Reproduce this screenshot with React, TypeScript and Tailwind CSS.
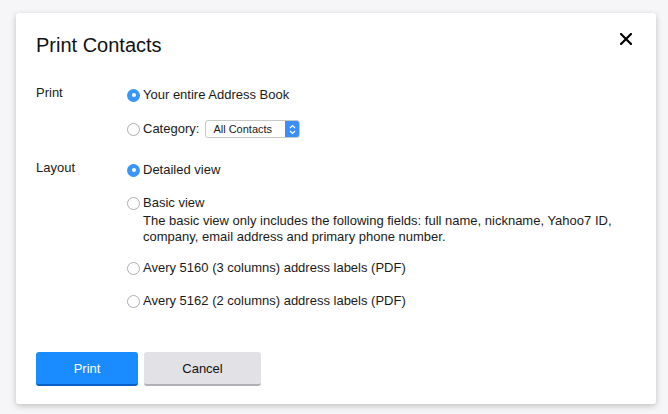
import React from "react";

function Radio({ checked }: { checked?: boolean }) {
  return checked ? (
    <span className="w-[13px] h-[13px] rounded-full bg-[#3a96f7] flex items-center justify-center shrink-0">
      <span className="w-[4px] h-[4px] rounded-full bg-white" />
    </span>
  ) : (
    <span className="w-[13px] h-[13px] rounded-full bg-white border border-[#aeaeae] shrink-0" />
  );
}

function Option({ checked, children }: { checked?: boolean; children: React.ReactNode }) {
  return (
    <div className="h-[18px] flex items-center gap-[3px]">
      <Radio checked={checked} />
      <span className="leading-[16px]">{children}</span>
    </div>
  );
}

export default function App() {
  return (
    <div className="min-h-[414px] bg-[#f6f6f8] pt-[13px] pl-[16px] text-[13px] text-[#1a1a1a]" style={{ fontFamily: '"Liberation Sans", Arial, sans-serif' }}>
      <div className="w-[640px] h-[391px] bg-white rounded-[3px] shadow-[0_2px_6px_rgba(0,0,0,0.22)] flex flex-col px-5">
        <div className="mt-[18px] flex justify-between items-start">
          <h1 className="text-[20px] leading-[28px] text-[#111]">Print Contacts</h1>
          <svg width="12" height="12" viewBox="0 0 12 12" className="mt-[2px] mr-[4px]">
            <path d="M1 1L11 11M11 1L1 11" stroke="#000" strokeWidth="2.2" strokeLinecap="square" />
          </svg>
        </div>

        <div className="grid grid-cols-[91px_1fr] mt-[27px]">
          <div className="-mt-[2px] leading-[18px]">Print</div>
          <div className="flex flex-col gap-[16px]">
            <Option checked>Your entire Address Book</Option>
            <div className="h-[18px] flex items-center gap-[3px]">
              <Radio />
              <span className="leading-[16px]">Category:</span>
              <div className="ml-[3px] w-[95px] h-[18px] border border-[#c8c8c8] rounded-[3px] flex items-stretch overflow-hidden bg-white">
                <span className="flex-1 text-[11px] leading-[16px] pl-[7px]">All Contacts</span>
                <span className="w-[14px] bg-[#3a8ef6] flex items-center justify-center">
                  <svg width="7" height="11" viewBox="0 0 7 11">
                    <path d="M1 4L3.5 1.5L6 4M1 7L3.5 9.5L6 7" stroke="#fff" strokeWidth="1.2" fill="none" />
                  </svg>
                </span>
              </div>
            </div>
          </div>

          <div className="mt-[21px] leading-[18px]">Layout</div>
          <div className="flex flex-col mt-[23px]">
            <Option checked>Detailed view</Option>
            <div className="mt-[15px]">
              <Option>Basic view</Option>
              <p className="pl-[16px] leading-[16px] mt-[1px]">
                The basic view only includes the following fields: full name, nickname, Yahoo7 ID,
                <br />
                company, email address and primary phone number.
              </p>
            </div>
            <div className="mt-[14px]">
              <Option>Avery 5160 (3 columns) address labels (PDF)</Option>
            </div>
            <div className="mt-[15px]">
              <Option>Avery 5162 (2 columns) address labels (PDF)</Option>
            </div>
          </div>
        </div>

        <div className="mt-[42px] flex gap-[6px]">
          <button className="w-[102px] h-[34px] pt-[2px] rounded-[3px] bg-[#1a8cff] border-b-2 border-[#0a5fc4] text-white text-[13px]">Print</button>
          <button className="w-[117px] h-[34px] pt-[2px] rounded-[3px] bg-[#e1e1e6] border-b-2 border-[#b0b0b8] text-[#111] text-[13px]">Cancel</button>
        </div>
      </div>
    </div>
  );
}
